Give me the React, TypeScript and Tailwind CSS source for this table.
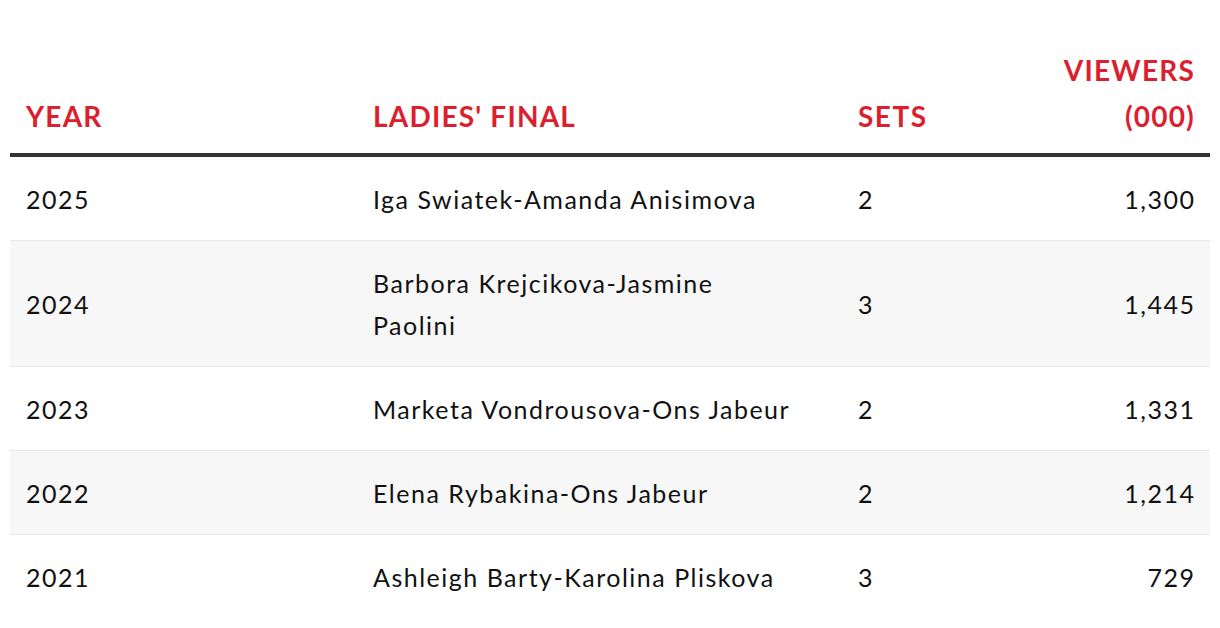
import React from "react";

const rows = [
  { year: "2025", final: "Iga Swiatek-Amanda Anisimova", sets: "2", viewers: "1,300" },
  { year: "2024", final: "Barbora Krejcikova-Jasmine Paolini", sets: "3", viewers: "1,445" },
  { year: "2023", final: "Marketa Vondrousova-Ons Jabeur", sets: "2", viewers: "1,331" },
  { year: "2022", final: "Elena Rybakina-Ons Jabeur", sets: "2", viewers: "1,214" },
  { year: "2021", final: "Ashleigh Barty-Karolina Pliskova", sets: "3", viewers: "729" },
];

export default function App() {
  return (
    <div className="w-[1220px] h-[628px] bg-white px-[10px] pt-[47px] overflow-hidden" style={{ fontFamily: "Lato, 'Open Sans', sans-serif" }}>
      <table className="w-[1200px] table-fixed border-collapse">
        <colgroup>
          <col className="w-[347px]" />
          <col className="w-[485px]" />
          <col className="w-[200px]" />
          <col className="w-[168px]" />
        </colgroup>
        <thead>
          <tr className="border-b-4 border-[#333333]">
            <th className="pl-4 pr-4 pb-[14px] align-bottom text-left text-[28px] leading-[46px] font-bold tracking-[1.2px] text-[#dc1f2e]">YEAR</th>
            <th className="pl-4 pr-[47px] pb-[14px] align-bottom text-left text-[28px] leading-[46px] font-bold tracking-[1.2px] text-[#dc1f2e]">LADIES' FINAL</th>
            <th className="pl-4 pr-4 pb-[14px] align-bottom text-left text-[28px] leading-[46px] font-bold tracking-[1.5px] text-[#dc1f2e]">SETS</th>
            <th className="pl-4 pr-[15px] pb-[14px] align-bottom text-right text-[28px] leading-[46px] font-bold tracking-[1.2px] text-[#dc1f2e]">VIEWERS (000)</th>
          </tr>
        </thead>
        <tbody>
          {rows.map((r, i) => (
            <tr key={r.year} className={`${i < rows.length - 1 ? "border-b border-[#e8e8e8]" : ""} ${i % 2 === 1 ? "bg-[#f7f7f7]" : "bg-white"}`}>
              <td className="pl-4 pr-4 py-[20.5px] align-middle text-[25px] leading-[42px] tracking-[1.5px] text-[#111111]">{r.year}</td>
              <td className="pl-4 pr-[47px] py-[20.5px] align-middle text-[25px] leading-[42px] tracking-[1.5px] text-[#111111]">{r.final}</td>
              <td className="pl-4 pr-4 py-[20.5px] align-middle text-[25px] leading-[42px] tracking-[1.5px] text-[#111111]">{r.sets}</td>
              <td className="pl-4 pr-[14.5px] py-[20.5px] align-middle text-right text-[25px] leading-[42px] tracking-[1.5px] text-[#111111]">{r.viewers}</td>
            </tr>
          ))}
        </tbody>
      </table>
    </div>
  );
}
